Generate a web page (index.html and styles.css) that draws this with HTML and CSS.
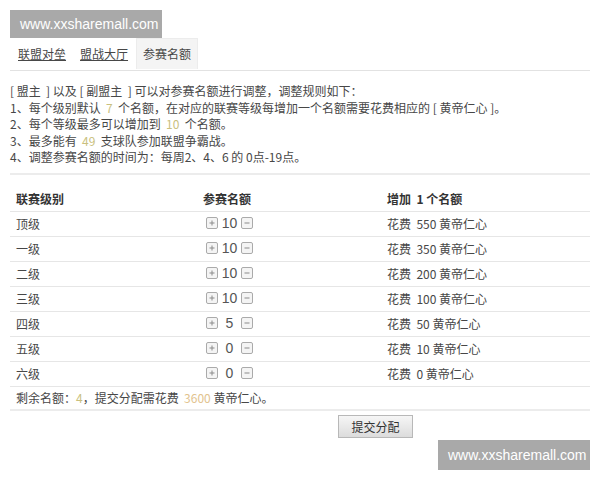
FILE: index.html
```html
<!DOCTYPE html>
<html lang="zh-CN">

<head>
    <meta charset="UTF-8">
    <title>参赛名额</title>
    <link rel="stylesheet" href="styles.css">
</head>

<body>
    <div class="mark mark-top">www.xxsharemall.com</div>

    <div class="page">
        <ul class="tabs">
            <li class="tab"><a href="#">联盟对垒</a></li>
            <li class="tab"><a href="#">盟战大厅</a></li>
            <li class="tab active">参赛名额</li>
        </ul>

        <div class="rules">
            <p>[&nbsp;盟主&nbsp;&nbsp;]&nbsp;以及&nbsp;[&nbsp;副盟主&nbsp;&nbsp;]&nbsp;可以对参赛名额进行调整，调整规则如下：</p>
            <p>1、每个级别默认 &nbsp;<span class="hl">7</span>&nbsp; 个名额，在对应的联赛等级每增加一个名额需要花费相应的 [&nbsp;黄帝仁心&nbsp;]。</p>
            <p>2、每个等级最多可以增加到 &nbsp;<span class="hl">10</span>&nbsp; 个名额。</p>
            <p>3、最多能有 &nbsp;<span class="hl">49</span>&nbsp; 支球队参加联盟争霸战。</p>
            <p>4、调整参赛名额的时间为：每周2、4、6 的 0点-19点。</p>
        </div>

        <table class="quota">
            <thead>
                <tr>
                    <th class="c1">联赛级别</th>
                    <th class="c2">参赛名额</th>
                    <th>增加 &nbsp;1 个名额</th>
                </tr>
            </thead>
            <tbody id="rows"></tbody>
            <tfoot>
                <tr>
                    <td colspan="3">剩余名额：<span class="hl">4</span>，提交分配需花费 &nbsp;<span class="hl2">3600</span> 黄帝仁心。</td>
                </tr>
            </tfoot>
        </table>

        <div class="actions">
            <button class="submit">提交分配</button>
        </div>
    </div>

    <div class="mark mark-bottom">www.xxsharemall.com</div>

    <script>
        const levels = [
            ['顶级', 10, 550],
            ['一级', 10, 350],
            ['二级', 10, 200],
            ['三级', 10, 100],
            ['四级', 5, 50],
            ['五级', 0, 10],
            ['六级', 0, 0]
        ];

        const plusIcon = '<svg class="btn" width="12" height="12" viewBox="0 0 12 12"><rect x="0.5" y="0.5" width="11" height="11" rx="1.5" fill="#f4f4f4" stroke="#aaa"/><path d="M3.5 6h5M6 3.5v5" stroke="#8a8a8a" stroke-width="1"/></svg>';
        const minusIcon = '<svg class="btn" width="12" height="12" viewBox="0 0 12 12"><rect x="0.5" y="0.5" width="11" height="11" rx="1.5" fill="#f4f4f4" stroke="#aaa"/><path d="M3.5 6h5" stroke="#8a8a8a" stroke-width="1"/></svg>';

        const tbody = document.getElementById('rows');
        levels.forEach(([name, count, cost]) => {
            const row = tbody.insertRow();
            row.insertCell(0).textContent = name;
            row.insertCell(1).innerHTML = `<span class="stepper">${plusIcon}<span class="num">${count}</span>${minusIcon}</span>`;
            row.insertCell(2).innerHTML = `花费 &nbsp;${cost} 黄帝仁心`;
        });
    </script>
</body>

</html>
```

FILE: styles.css
```css
body {
    margin: 0;
    background-color: #fff;
    color: #474747;
    font-family: "Noto Sans CJK SC", "DejaVu Sans", sans-serif;
    font-size: 12px;
}

.page {
    padding: 40px 10px 0;
}

.mark {
    position: absolute;
    background-color: #a9a9a9;
    color: #fff;
    font-family: "Liberation Sans", Arial, sans-serif;
    font-size: 14px;
    line-height: 28px;
    padding: 0 10px;
}

.mark-top {
    left: 10px;
    top: 10px;
    width: 132px;
}

.mark-bottom {
    left: 438px;
    top: 440px;
    width: 132px;
    line-height: 30px;
}

.tabs {
    display: flex;
    margin: 0;
    padding: 0 0 0 2px;
    list-style: none;
    border-bottom: 1px solid #e2e2e2;
    height: 30px;
}

.tab {
    padding: 0 6px;
    line-height: 28px;
    margin-right: 2px;
}

.tab a {
    color: #474747;
    text-decoration: underline;
}

.tab.active {
    background-color: #f4f4f4;
    border: 1px solid #ececec;
    border-bottom: none;
    height: 30px;
    margin-top: -2px;
    line-height: 30px;
}

.rules {
    padding: 12px 0 7px;
    border-bottom: 2px solid #ececec;
}

.rules p {
    margin: 0;
    line-height: 16.5px;
}

.hl {
    color: #c9bf7e;
}

.hl2 {
    color: #e2c38e;
}

.quota {
    width: 100%;
    border-collapse: collapse;
    margin-top: 12px;
}

.quota th,
.quota td {
    text-align: left;
    padding: 0 6px;
    height: 24px;
    border-bottom: 1px solid #e6e6e6;
}

.quota th {
    color: #333;
    font-weight: bold;
}

.quota .c1 {
    width: 175px;
}

.quota .c2 {
    width: 172px;
}

.quota tfoot td {
    height: 22px;
    border-bottom: 2px solid #ececec;
}

.stepper {
    display: inline-flex;
    align-items: center;
    margin-left: 3px;
}

.btn {
    display: block;
}

.num {
    width: 23px;
    text-align: center;
    color: #555;
    font-family: "Liberation Sans", Arial, sans-serif;
    font-size: 14px;
}

.actions {
    padding: 4px 0 0 328px;
}

.submit {
    width: 75px;
    height: 23px;
    font-family: "Noto Sans CJK SC", sans-serif;
    font-size: 12px;
    color: #333;
    background: linear-gradient(#f6f6f6, #dcdcdc);
    border: 1px solid #b8b8b8;
    border-radius: 0;
    padding: 0;
}
```
